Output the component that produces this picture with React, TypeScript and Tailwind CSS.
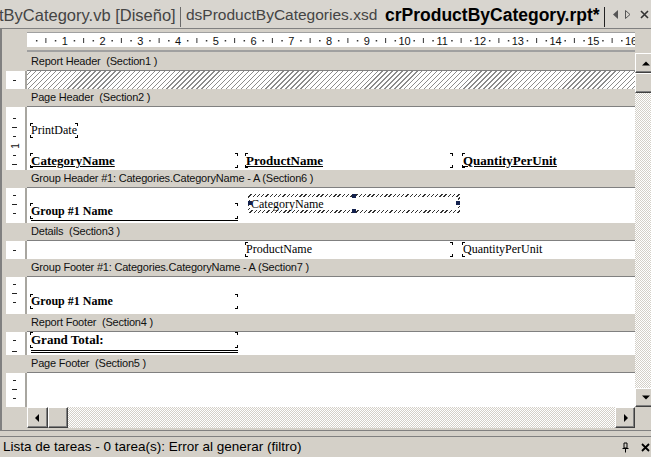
import React from "react";

const SERIF = "font-['Liberation_Serif','Times_New_Roman',serif]";

type Mark = { y: number; t: "d" | "l" | "n" };

function VRuler({ h, marks }: { h: number; marks: Mark[] }) {
  return (
    <div className="flex shrink-0 h-full">
      <div className="w-[4px] bg-[#d4d0c8]" />
      <div className="w-[19px] bg-white">
        <svg width="19" height={h} className="block">
          {marks.map((m, i) =>
            m.t === "d" ? (
              <rect key={i} x="7" y={m.y} width="3" height="1" fill="#222" />
            ) : m.t === "l" ? (
              <rect key={i} x="6" y={m.y} width="5" height="1" fill="#222" />
            ) : (
              <text
                key={i}
                x="9"
                y={m.y}
                fontSize="10"
                fontFamily="Liberation Sans, Arial, sans-serif"
                textAnchor="middle"
                dominantBaseline="central"
                transform={`rotate(-90 9 ${m.y})`}
                fill="#111"
              >
                1
              </text>
            )
          )}
        </svg>
      </div>
      <div className="w-[2px] bg-[#a8a6a0]" />
    </div>
  );
}

function Bar({ title }: { title: string }) {
  return (
    <div className="h-[18px] flex shrink-0">
      <div className="w-[25px]" />
      <div className="flex-1 border-b border-[#808080] pl-[4px] text-[11px] tracking-[-0.2px] leading-[17px] text-[#111] whitespace-pre">
        {title}
      </div>
    </div>
  );
}

function Corners() {
  return (
    <>
      <span className="absolute left-0 top-0 w-[3px] h-[3px] border-l border-t border-black" />
      <span className="absolute right-0 top-0 w-[3px] h-[3px] border-r border-t border-black" />
      <span className="absolute left-0 bottom-0 w-[3px] h-[3px] border-l border-b border-black" />
      <span className="absolute right-0 bottom-0 w-[3px] h-[3px] border-r border-b border-black" />
    </>
  );
}

function Ruler() {
  const u = 37.75;
  const items: React.ReactNode[] = [];
  for (let n = 0; n < 16; n++) {
    const b = n * u;
    items.push(<rect key={"a" + n} x={b + u / 4 - 0.5} y="7" width="1.5" height="1.5" fill="#333" />);
    items.push(<rect key={"b" + n} x={b + u / 2 - 0.5} y="5" width="1" height="5" fill="#333" />);
    items.push(<rect key={"c" + n} x={b + (3 * u) / 4 - 0.5} y="7" width="1.5" height="1.5" fill="#333" />);
    items.push(
      <text
        key={"t" + n}
        x={b + u}
        y="11.5"
        fontSize="11"
        fontFamily="Liberation Sans, Arial, sans-serif"
        textAnchor="middle"
        fill="#111"
      >
        {n + 1}
      </text>
    );
  }
  return (
    <div className="w-[608px] h-[15px] bg-white border-t border-[#a0a0a0] overflow-hidden">
      <svg width="608" height="14" className="block">
        {items}
      </svg>
    </div>
  );
}

function RaisedBtn({ children, cls }: { children?: React.ReactNode; cls: string }) {
  return (
    <div
      className={
        "shrink-0 flex items-center justify-center bg-[#d4d0c8] border border-t-white border-l-white border-r-[#404040] border-b-[#404040] shadow-[inset_-1px_-1px_0_#808080] " +
        cls
      }
    >
      {children}
    </div>
  );
}

const TRACK =
  "bg-[repeating-conic-gradient(#ffffff_0%_25%,#d4d0c8_0%_50%)] bg-[length:2px_2px]";

function TabBar() {
  return (
    <div className="h-[28px] flex items-center bg-[#d8d5cf] whitespace-nowrap overflow-hidden">
      <div className="w-[181px] shrink-0 overflow-hidden text-[16.5px] text-[#444] pt-[2px] -ml-[1px]">
        tByCategory.vb [Diseño]
      </div>
      <div className="w-[1px] h-[20px] mt-[6px] bg-[#6a6a6a] shrink-0" />
      <div className="w-[198px] shrink-0 overflow-hidden text-[15.5px] text-[#444] pl-[5px] pt-[2px]">
        dsProductByCategories.xsd
      </div>
      <div className="w-[225px] shrink-0 overflow-hidden text-[17.5px] font-bold text-black pl-[6px] pt-[2px]">
        crProductByCategory.rpt*
      </div>
      <div className="w-[1px] h-[20px] mt-[6px] bg-[#222] shrink-0" />
      <div className="flex items-center gap-[6px] ml-[8px] pt-[1px]">
        <svg width="6" height="9" viewBox="0 0 6 9">
          <path d="M5 0 L0 4.5 L5 9 Z" fill="#555" />
        </svg>
        <svg width="6" height="9" viewBox="0 0 6 9">
          <path d="M0.5 0.5 L5 4.5 L0.5 8.5 Z" fill="none" stroke="#555" strokeWidth="1" />
        </svg>
        <svg width="9" height="9" viewBox="0 0 9 9" className="ml-[3px]">
          <path d="M1 1 L8 8 M8 1 L1 8" stroke="#333" strokeWidth="1.6" />
        </svg>
      </div>
    </div>
  );
}

function Sections() {
  return (
    <div className="h-[354px] flex flex-col overflow-hidden">
      {/* Report Header */}
      <Bar title="Report Header  (Section1 )" />
      <div className="h-[18px] flex shrink-0">
        <VRuler h={18} marks={[{ y: 9, t: "d" }]} />
        <div className="flex-1 bg-[repeating-linear-gradient(135deg,#ffffff_0px,#ffffff_2.5px,#8c8c8c_2.5px,#8c8c8c_3.5px)]" />
      </div>

      {/* Page Header */}
      <Bar title="Page Header  (Section2 )" />
      <div className="h-[63px] flex shrink-0">
        <VRuler
          h={63}
          marks={[
            { y: 11, t: "d" },
            { y: 20, t: "l" },
            { y: 29, t: "d" },
            { y: 39, t: "n" },
            { y: 48, t: "d" },
            { y: 57, t: "l" },
          ]}
        />
        <div className={"flex-1 relative bg-white text-black " + SERIF}>
          <div className="absolute left-[3px] top-[16px] w-[48px] h-[15px]">
            <Corners />
            <span className="absolute left-[1px] top-0 text-[12px] leading-[15px]">PrintDate</span>
          </div>
          <div className="absolute left-[3px] top-[46px] w-[208px] h-[15px]">
            <Corners />
            <span className="absolute left-[1px] top-0 text-[13px] leading-[15px] font-bold underline">CategoryName</span>
          </div>
          <div className="absolute left-[218px] top-[46px] w-[208px] h-[15px]">
            <Corners />
            <span className="absolute left-[1px] top-0 text-[13px] leading-[15px] font-bold underline">ProductName</span>
          </div>
          <div className="absolute left-[435px] top-[46px] w-[208px] h-[15px]">
            <Corners />
            <span className="absolute left-[1px] top-0 text-[13px] leading-[15px] font-bold underline">QuantityPerUnit</span>
          </div>
        </div>
      </div>

      {/* Group Header */}
      <Bar title="Group Header #1: Categories.CategoryName - A (Section6 )" />
      <div className="h-[35px] flex shrink-0">
        <VRuler
          h={35}
          marks={[
            { y: 7, t: "d" },
            { y: 16, t: "l" },
            { y: 25, t: "d" },
          ]}
        />
        <div className={"flex-1 relative bg-white text-black " + SERIF}>
          <div className="absolute left-[3px] top-[15px] w-[208px] h-[16px]">
            <Corners />
            <span className="absolute left-[1px] top-0 text-[12px] leading-[16px] font-bold">Group #1 Name</span>
          </div>
          <div className="absolute left-[4px] top-[32px] w-[207px] h-[1px] bg-black" />
          <div className="absolute left-[221px] top-[6px] w-[212px] h-[19px] bg-[repeating-linear-gradient(135deg,#ffffff_0px,#ffffff_2px,#333_2px,#333_3px)]">
            <div className="absolute left-[2px] right-[2px] top-[3px] bottom-[3px] bg-white">
              <span className="absolute left-[1px] top-0 text-[12px] leading-[14px]">CategoryName</span>
            </div>
            <span className="absolute left-[0px] top-[7px] w-[4px] h-[4px] bg-[#14224e]" />
            <span className="absolute right-[0px] top-[7px] w-[4px] h-[4px] bg-[#14224e]" />
            <span className="absolute left-[104px] top-[0px] w-[4px] h-[4px] bg-[#14224e]" />
            <span className="absolute left-[104px] bottom-[0px] w-[4px] h-[4px] bg-[#14224e]" />
          </div>
        </div>
      </div>

      {/* Details */}
      <Bar title="Details  (Section3 )" />
      <div className="h-[18px] flex shrink-0">
        <VRuler h={18} marks={[{ y: 9, t: "d" }]} />
        <div className={"flex-1 relative bg-white text-black " + SERIF}>
          <div className="absolute left-[218px] top-[1px] w-[208px] h-[15px]">
            <Corners />
            <span className="absolute left-[1px] top-0 text-[12px] leading-[15px]">ProductName</span>
          </div>
          <div className="absolute left-[435px] top-[1px] w-[208px] h-[15px]">
            <Corners />
            <span className="absolute left-[1px] top-0 text-[12px] leading-[15px]">QuantityPerUnit</span>
          </div>
        </div>
      </div>

      {/* Group Footer */}
      <Bar title="Group Footer #1: Categories.CategoryName - A (Section7 )" />
      <div className="h-[37px] flex shrink-0">
        <VRuler
          h={37}
          marks={[
            { y: 7, t: "d" },
            { y: 16, t: "l" },
            { y: 25, t: "d" },
          ]}
        />
        <div className={"flex-1 relative bg-white text-black " + SERIF}>
          <div className="absolute left-[3px] top-[17px] w-[208px] h-[15px]">
            <Corners />
            <span className="absolute left-[1px] top-0 text-[12px] leading-[15px] font-bold">Group #1 Name</span>
          </div>
        </div>
      </div>

      {/* Report Footer */}
      <Bar title="Report Footer  (Section4 )" />
      <div className="h-[23px] flex shrink-0">
        <VRuler
          h={23}
          marks={[
            { y: 8, t: "d" },
            { y: 19, t: "l" },
          ]}
        />
        <div className={"flex-1 relative bg-white text-black " + SERIF}>
          <div className="absolute left-[3px] top-[0px] w-[208px] h-[16px]">
            <Corners />
            <span className="absolute left-[1px] top-0 text-[13px] leading-[16px] font-bold">Grand Total:</span>
          </div>
          <div className="absolute left-[4px] top-[18px] w-[207px] h-[1px] bg-black" />
          <div className="absolute left-[4px] top-[20px] w-[207px] h-[1px] bg-black" />
        </div>
      </div>

      {/* Page Footer */}
      <Bar title="Page Footer  (Section5 )" />
      <div className="h-[34px] flex shrink-0">
        <VRuler
          h={34}
          marks={[
            { y: 7, t: "d" },
            { y: 16, t: "l" },
            { y: 25, t: "d" },
          ]}
        />
        <div className="flex-1 bg-white" />
      </div>
    </div>
  );
}

function HScroll() {
  return (
    <div className="h-[21px] flex shrink-0">
      <div className="w-[25px] shrink-0" />
      <RaisedBtn cls="w-[21px] h-[21px]">
        <svg width="5" height="8" viewBox="0 0 5 8">
          <path d="M4 0 L0 4 L4 8 Z" fill="#000" />
        </svg>
      </RaisedBtn>
      <RaisedBtn cls="w-[20px] h-[21px]" />
      <div className={"flex-1 " + TRACK} />
      <RaisedBtn cls="w-[20px] h-[21px]">
        <svg width="5" height="8" viewBox="0 0 5 8">
          <path d="M1 0 L5 4 L1 8 Z" fill="#000" />
        </svg>
      </RaisedBtn>
    </div>
  );
}

function VScroll() {
  return (
    <div className="w-[16px] h-[375px] flex flex-col overflow-hidden shrink-0">
      <RaisedBtn cls="w-[21px] h-[20px]">
        <svg width="8" height="5" viewBox="0 0 8 5">
          <path d="M0 4.5 L4 0.5 L8 4.5 Z" fill="#000" />
        </svg>
      </RaisedBtn>
      <RaisedBtn cls="w-[21px] h-[20px]" />
      <div className={"flex-1 w-[21px] " + TRACK} />
      <RaisedBtn cls="w-[21px] h-[19px]">
        <svg width="8" height="5" viewBox="0 0 8 5">
          <path d="M0 0.5 L4 4.5 L8 0.5 Z" fill="#000" />
        </svg>
      </RaisedBtn>
      <div className="h-[21px] bg-[#d4d0c8]" />
    </div>
  );
}

function StatusBar() {
  return (
    <div className="h-[21px] border-t border-[#808080] flex items-center whitespace-nowrap">
      <span className="pl-[3px] text-[13.5px] text-black flex-1 leading-[18px]">
        Lista de tareas - 0 tarea(s): Error al generar (filtro)
      </span>
      <svg width="9" height="11" viewBox="0 0 9 11" className="mr-[11px]">
        <path d="M3 1 H6 V6 H3 Z M1.5 6.5 H7.5 M4.5 6.5 V10.5" fill="none" stroke="#000" strokeWidth="1" />
      </svg>
      <svg width="9" height="9" viewBox="0 0 9 9" className="mr-[1px]">
        <path d="M1 1 L8 8 M8 1 L1 8" stroke="#000" strokeWidth="1.8" />
      </svg>
    </div>
  );
}

export default function App() {
  return (
    <div className="w-[651px] h-[457px] overflow-hidden bg-[#d4d0c8] font-['Liberation_Sans',Arial,sans-serif] text-black select-none">
      <TabBar />
      <div className="h-[403px] border-t border-l-2 border-b border-[#808080] flex flex-col">
        <div className="h-[24px] shrink-0 pl-[25px] pt-[3px]">
          <Ruler />
          <div className="mt-[3px] h-[2px] w-[608px] bg-[#a0a0a0]" />
        </div>
        <div className="h-[375px] flex shrink-0">
          <div className="w-[633px] flex flex-col shrink-0">
            <Sections />
            <HScroll />
          </div>
          <VScroll />
        </div>
      </div>
      <div className="h-[5px]" />
      <StatusBar />
    </div>
  );
}
